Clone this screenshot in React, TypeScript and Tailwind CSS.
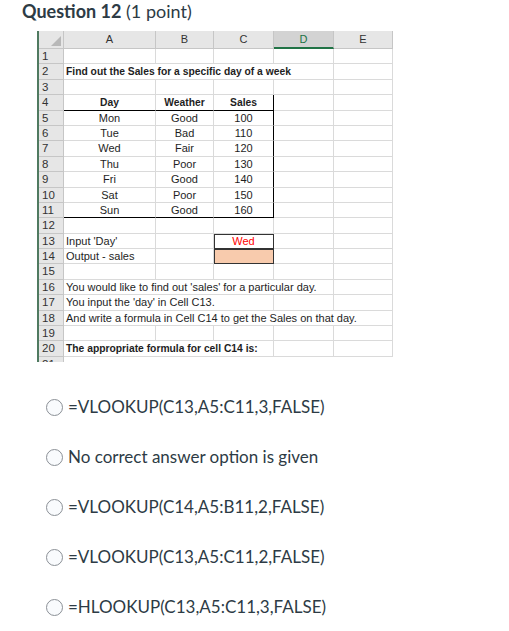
const cols = ["A", "B", "C", "D", "E"];

type Cell = { text?: string; span?: number; cls?: string };

const bold = "font-bold text-[10.3px]";

const rows: Cell[][] = [
  [{}, {}, {}, {}, {}],
  [{ text: "Find out the Sales for a specific day of a week", span: 4, cls: bold + " text-left pl-[2px]" }, {}],
  [{}, {}, {}, {}, {}],
  [
    { text: "Day", cls: bold + " border-b-black" },
    { text: "Weather", cls: bold + " border-b-black" },
    { text: "Sales", cls: bold + " border-b-black border-r-black" },
    {},
    {},
  ],
];

const data = [
  ["Mon", "Good", "100"],
  ["Tue", "Bad", "110"],
  ["Wed", "Fair", "120"],
  ["Thu", "Poor", "130"],
  ["Fri", "Good", "140"],
  ["Sat", "Poor", "150"],
  ["Sun", "Good", "160"],
];

data.forEach(([d, w, s], i) => {
  const last = i === data.length - 1;
  const b = last ? " border-b-black" : "";
  rows.push([
    { text: d, cls: b },
    { text: w, cls: b },
    { text: s, cls: "border-r-black" + b },
    {},
    {},
  ]);
});

rows.push(
  [{}, {}, {}, {}, {}],
  [{ text: "Input 'Day'", cls: "text-left pl-[2px]" }, {}, { text: "Wed", cls: "text-[#ff0000] outline outline-1 outline-[#333] -outline-offset-1" }, {}, {}],
  [{ text: "Output - sales", cls: "text-left pl-[2px]" }, {}, { cls: "bg-[#f8cbad] outline outline-1 outline-[#333] -outline-offset-1" }, {}, {}],
  [{}, {}, {}, {}, {}],
  [{ text: "You would like to find out 'sales' for a particular day.", span: 4, cls: "text-left pl-[2px]" }, {}],
  [{ text: "You input the 'day' in Cell C13.", span: 3, cls: "text-left pl-[2px]" }, {}, {}],
  [{ text: "And write a formula in Cell C14 to get the Sales on that day.", span: 5, cls: "text-left pl-[2px]" }],
  [{}, {}, {}, {}, {}],
  [{ text: "The appropriate formula for cell C14 is:", span: 3, cls: bold + " text-left pl-[2px]" }, {}, {}],
);

const options = [
  "=VLOOKUP(C13,A5:C11,3,FALSE)",
  "No correct answer option is given",
  "=VLOOKUP(C14,A5:B11,2,FALSE)",
  "=VLOOKUP(C13,A5:C11,2,FALSE)",
  "=HLOOKUP(C13,A5:C11,3,FALSE)",
];

const spanCls: Record<number, string> = {
  1: "col-span-1",
  2: "col-span-2",
  3: "col-span-3",
  4: "col-span-4",
  5: "col-span-5",
};

function Sheet() {
  return (
    <div className="w-[356px] h-[331px] overflow-hidden border-l-2 border-[#4f7a60] bg-white font-['Liberation_Sans',sans-serif] text-[11px] text-[#1e1e1e]">
      <div className="grid grid-cols-[25px_92px_58px_60px_60px_59px]">
        {/* column headers */}
        <div className="relative h-[18px] bg-[#e6e6e6] border-r border-b border-[#c6c6c6]">
          <div className="absolute right-[2px] bottom-[2px] w-0 h-0 border-l-[10px] border-l-transparent border-b-[10px] border-b-[#b8b8b8]" />
        </div>
        {cols.map((c) => (
          <div
            key={c}
            className={
              "h-[18px] flex items-center justify-center border-r border-[#c6c6c6] text-[11px] text-[#333] " +
              (c === "D" ? "bg-[#d3d3d3] border-b-2 border-b-[#217346] text-[#217346]" : "bg-[#e6e6e6] border-b border-b-[#c6c6c6]")
            }
          >
            {c}
          </div>
        ))}

        {rows.map((row, r) => (
          <Row key={r} n={r + 1} cells={row} />
        ))}
        <div className="h-[15px] bg-[#e6e6e6] border-r border-[#c6c6c6] pl-[3px] text-[11.5px] leading-[15px] text-[#333]">21</div>
        <div className="col-span-5 h-[15px] border-b border-[#dadada]" />
      </div>
    </div>
  );
}

function Row({ n, cells }: { n: number; cells: Cell[] }) {
  return (
    <>
      <div className="h-[15.4px] bg-[#e6e6e6] border-r border-b border-[#c6c6c6] pl-[3px] text-[11.5px] leading-[15px] text-[#333]">
        {n}
      </div>
      {cells.map((c, i) => (
        <div
          key={i}
          className={
            "h-[15.4px] leading-[15px] text-center whitespace-nowrap border-r border-b border-[#dadada] " +
            spanCls[c.span ?? 1] +
            " " +
            (c.cls ?? "")
          }
        >
          {c.text}
        </div>
      ))}
    </>
  );
}

export default function App() {
  return (
    <div className="w-[509px] h-[631px] bg-white pl-[22px] font-['Lato',sans-serif] text-[#2d3b45]">
      <h1 className="text-[18px] leading-[22px] text-[#2d3b45]">
        <span className="font-bold">Question 12</span> <span>(1 point)</span>
      </h1>
      <div className="mt-[9px] ml-[15px]">
        <Sheet />
      </div>
      <div className="mt-[20px] flex flex-col">
        {options.map((o) => (
          <label key={o} className="h-[50px] flex items-center gap-[5px] pl-[24px]">
            <span className="w-[17px] h-[17px] rounded-full border border-[#8b9096] bg-[#f9fbfd]" />
            <span className="text-[17px] text-[#2d3b45]">{o}</span>
          </label>
        ))}
      </div>
    </div>
  );
}
